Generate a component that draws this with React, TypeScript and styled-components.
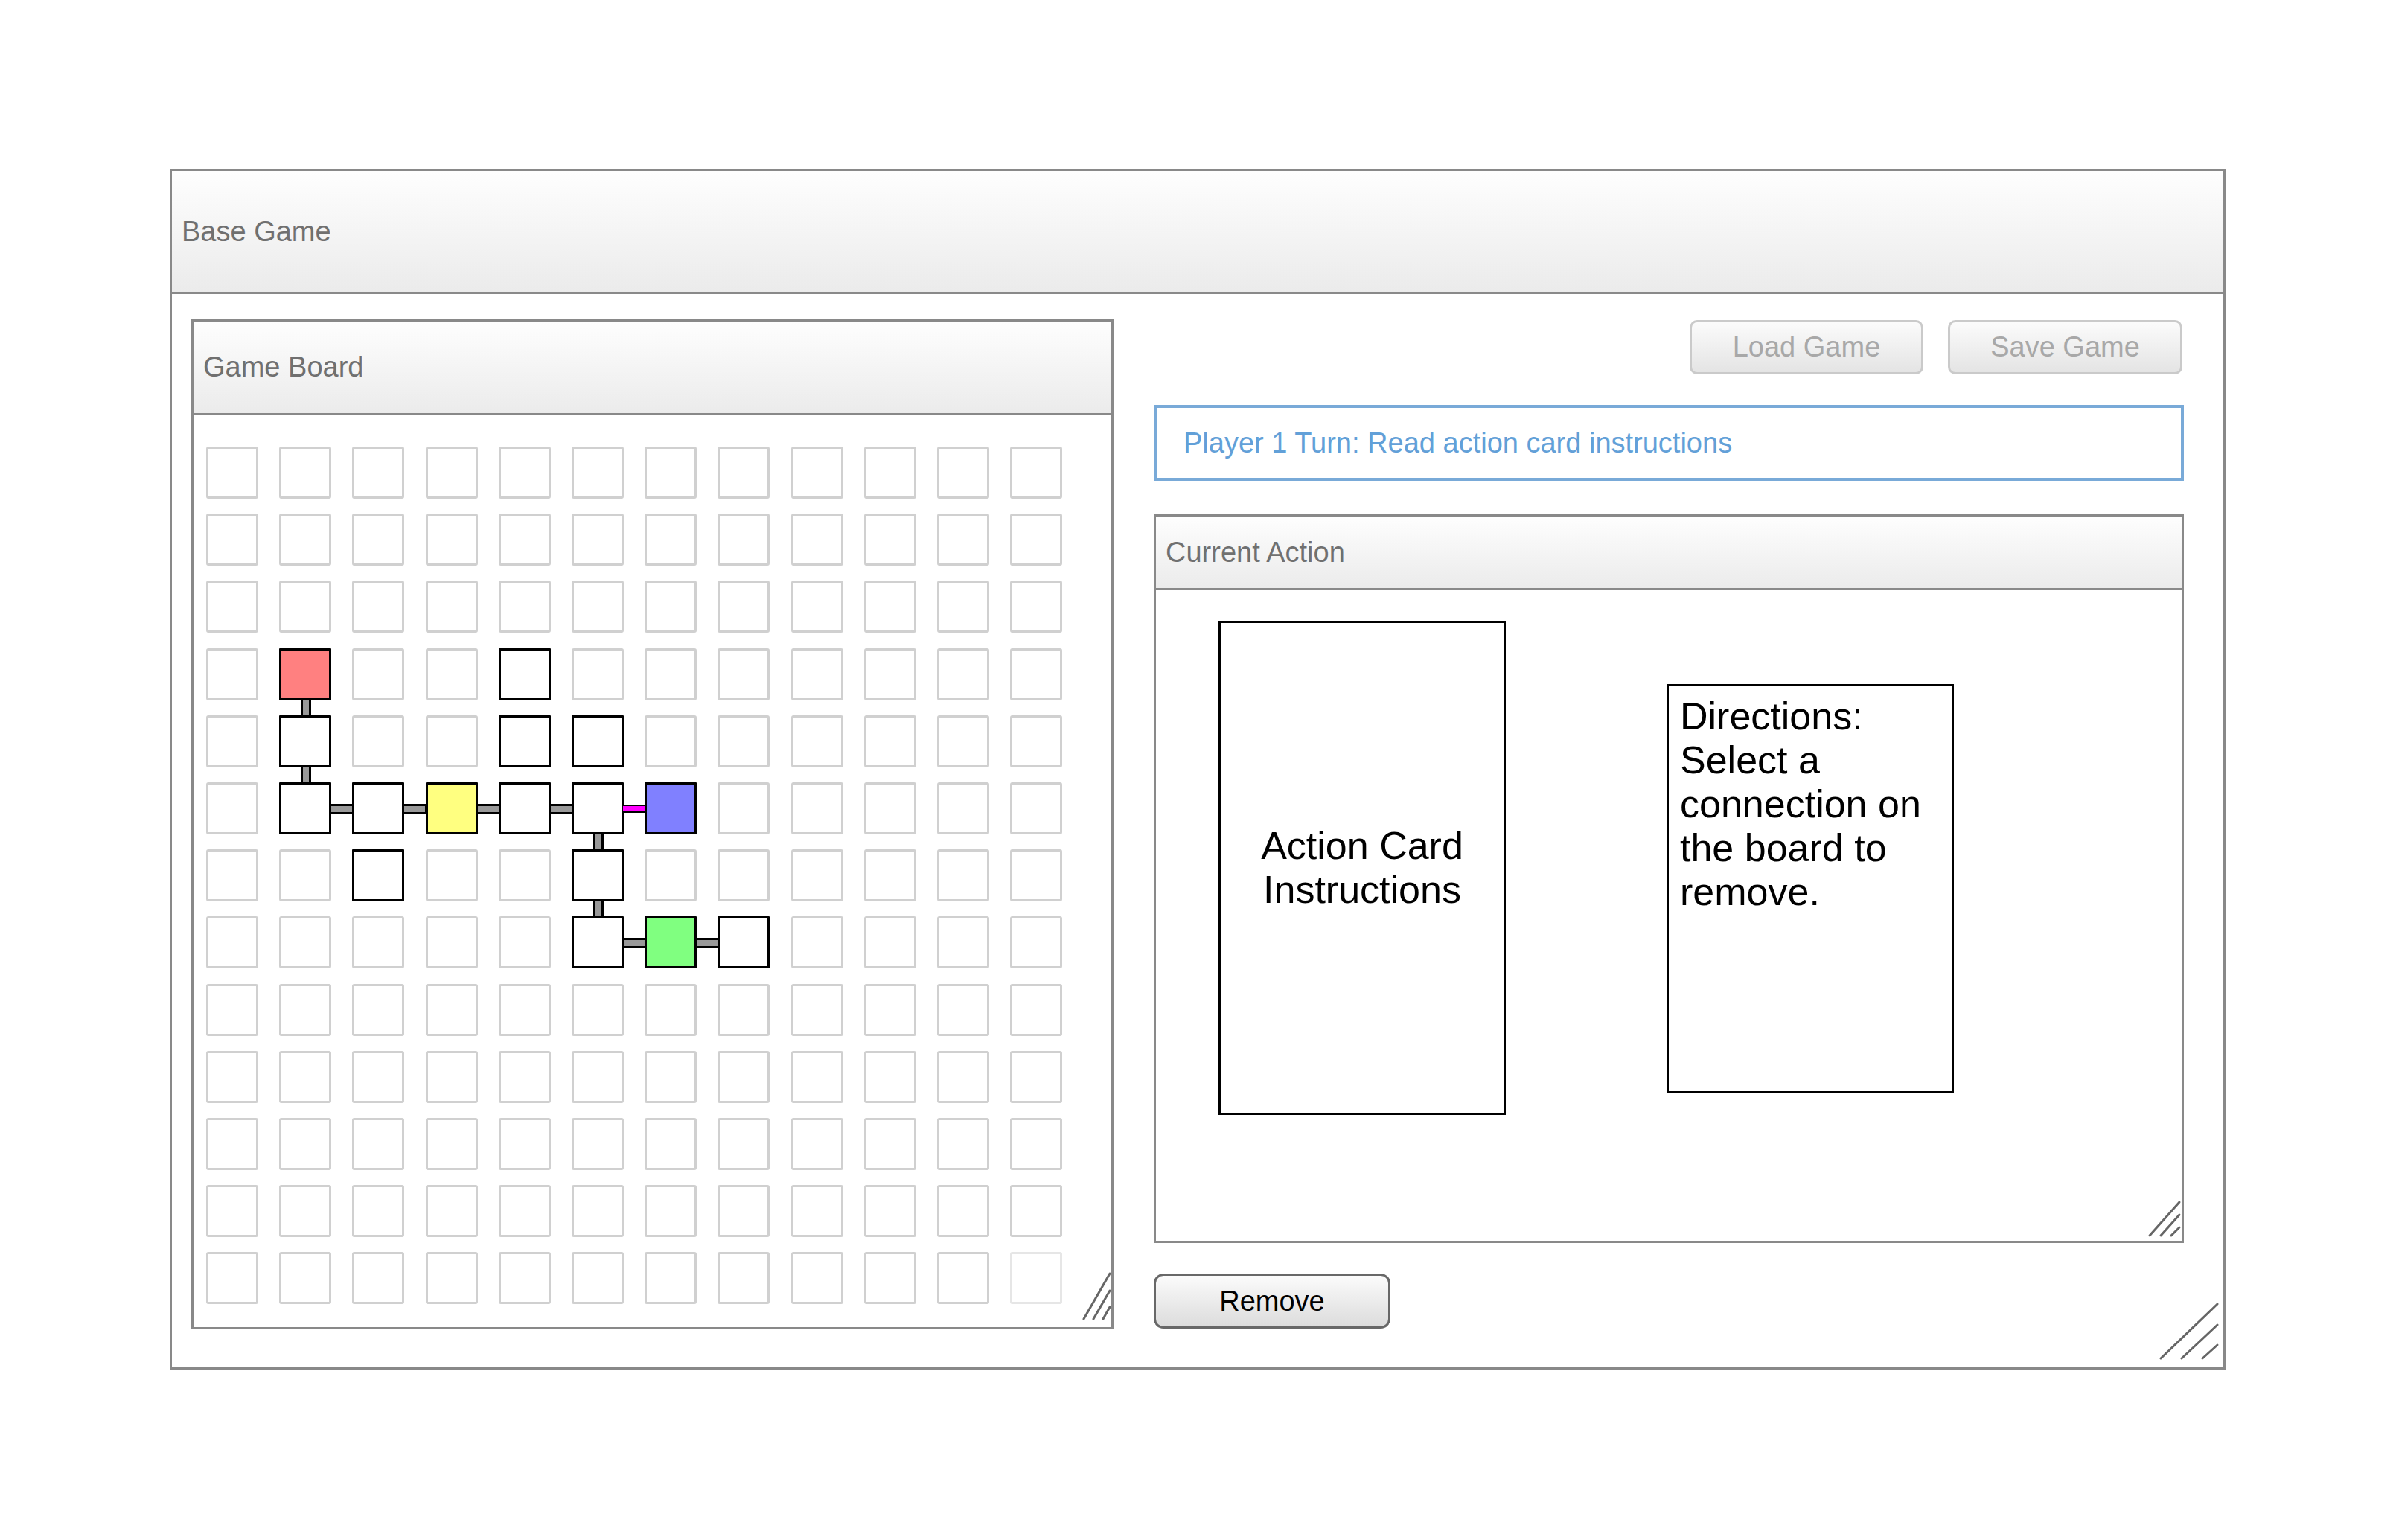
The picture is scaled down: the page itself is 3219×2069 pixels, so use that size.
import React from 'react';
import styled, { createGlobalStyle } from 'styled-components';

const GlobalStyle = createGlobalStyle`
  html, body { margin: 0; padding: 0; background: #ffffff; }
  body { font-family: "Liberation Sans", Arial, Helvetica, sans-serif; }
  * { box-sizing: border-box; }
`;

const Page = styled.div`
  width: 3219px;
  height: 2069px;
  padding: 227px 0 0 228px;
`;

const Window = styled.div`
  position: relative;
  width: 2762px;
  height: 1613px;
  border: 3px solid #898989;
  display: flex;
  flex-direction: column;
  background: #ffffff;
`;

const TitleBar = styled.div<{ $height: number }>`
  height: ${(p) => p.$height}px;
  flex: none;
  display: flex;
  align-items: center;
  padding-left: 13px;
  border-bottom: 3px solid #898989;
  background: linear-gradient(to bottom, #fefefe, #ebebeb);
  color: #707070;
  font-size: 38px;
  white-space: nowrap;
`;

const Body = styled.div`
  display: flex;
  align-items: flex-start;
  gap: 54px;
  padding: 34px 0 0 26px;
`;

const Panel = styled.div<{ $w: number; $h: number }>`
  position: relative;
  width: ${(p) => p.$w}px;
  height: ${(p) => p.$h}px;
  border: 3px solid #898989;
  display: flex;
  flex-direction: column;
  background: #ffffff;
  flex: none;
`;

const BoardArea = styled.div`
  padding: 42px 0 0 17px;
`;

const Grid = styled.div`
  display: grid;
  grid-template-columns: repeat(12, 70px);
  grid-auto-rows: 70px;
  column-gap: 28.2px;
  row-gap: 20.2px;
`;

type CellVariant = 'empty' | 'tile' | 'faint';

const Cell = styled.div<{ $variant: CellVariant; $fill?: string }>`
  position: relative;
  width: 70px;
  height: 70px;
  background: ${(p) => p.$fill || '#ffffff'};
  border: 3px solid
    ${(p) => (p.$variant === 'tile' ? '#000000' : p.$variant === 'faint' ? '#e6e6e6' : '#d0d0d0')};
  border-radius: ${(p) => (p.$variant === 'tile' ? '1px' : '3px')};
`;

const HLink = styled.span<{ $magenta?: boolean }>`
  position: absolute;
  z-index: 1;
  left: 64px;
  top: ${(p) => (p.$magenta ? 27 : 26)}px;
  width: 34px;
  height: ${(p) => (p.$magenta ? 11 : 14)}px;
  background: ${(p) => (p.$magenta ? '#ff00ff' : '#999999')};
  border: ${(p) => (p.$magenta ? 2 : 3)}px solid #000000;
`;

const VLink = styled.span`
  position: absolute;
  z-index: 1;
  top: 64px;
  left: 26px;
  width: 14px;
  height: 26px;
  background: #999999;
  border: 3px solid #000000;
`;

const Column = styled.div`
  width: 1384px;
  display: flex;
  flex-direction: column;
  flex: none;
`;

const ButtonRow = styled.div`
  display: flex;
  justify-content: flex-end;
  gap: 33px;
  margin-top: 1px;
  padding-right: 2px;
`;

const Button = styled.button<{ $disabled?: boolean; $w: number; $h: number }>`
  width: ${(p) => p.$w}px;
  height: ${(p) => p.$h}px;
  border: 3px solid ${(p) => (p.$disabled ? '#cacaca' : '#686868')};
  border-radius: ${(p) => (p.$disabled ? 10 : 13)}px;
  background: linear-gradient(to bottom, #fbfbfb, ${(p) => (p.$disabled ? '#e4e4e4' : '#dcdcdc')});
  color: ${(p) => (p.$disabled ? '#a8a8a8' : '#000000')};
  font-family: "Liberation Sans", Arial, Helvetica, sans-serif;
  font-size: 38px;
  padding: 0;
  display: flex;
  align-items: center;
  justify-content: center;
  flex: none;
`;

const TurnField = styled.div`
  margin-top: 41px;
  height: 102px;
  border: 4px solid #79aad8;
  padding-left: 36px;
  display: flex;
  align-items: center;
  color: #62a0d8;
  font-size: 38px;
  white-space: nowrap;
`;

const ActionWrap = styled.div`
  margin-top: 45px;
`;

const Cards = styled.div`
  display: flex;
  align-items: flex-start;
  gap: 216px;
  padding: 41px 0 0 84px;
`;

const Card = styled.div<{ $h: number; $offset?: number; $centered?: boolean }>`
  width: 386px;
  height: ${(p) => p.$h}px;
  margin-top: ${(p) => p.$offset || 0}px;
  border: 3px solid #000000;
  background: #ffffff;
  color: #000000;
  font-size: 52px;
  line-height: 59px;
  display: flex;
  flex: none;
  ${(p) =>
    p.$centered
      ? `align-items: center; justify-content: center; text-align: center;`
      : `align-items: flex-start; padding: 11px 12px 0 15px; text-align: left;`}
`;

const RemoveWrap = styled.div`
  margin-top: 41px;
`;

const GripSvg = styled.svg<{ $right: number; $bottom: number }>`
  position: absolute;
  right: ${(p) => p.$right}px;
  bottom: ${(p) => p.$bottom}px;
  z-index: 2;
`;

type Seg = [number, number, number, number];

const Grip: React.FC<{ w: number; h: number; right: number; bottom: number; lines: Seg[] }> = ({
  w,
  h,
  right,
  bottom,
  lines,
}) => (
  <GripSvg width={w} height={h} viewBox={`0 0 ${w} ${h}`} $right={right} $bottom={bottom}>
    {lines.map(([x1, y1, x2, y2], i) => (
      <line key={i} x1={x1} y1={y1} x2={x2} y2={y2} stroke="#666666" strokeWidth={3} strokeLinecap="round" />
    ))}
  </GripSvg>
);

type TileSpec = { fill?: string; right?: 'gray' | 'magenta'; down?: boolean };

const tiles: Record<string, TileSpec> = {
  '3-1': { fill: '#ff8080', down: true },
  '3-4': {},
  '4-1': { down: true },
  '4-4': {},
  '4-5': {},
  '5-1': { right: 'gray' },
  '5-2': { right: 'gray' },
  '5-3': { fill: '#ffff80', right: 'gray' },
  '5-4': { right: 'gray' },
  '5-5': { right: 'magenta', down: true },
  '5-6': { fill: '#8080ff' },
  '6-2': {},
  '6-5': { down: true },
  '7-5': { right: 'gray' },
  '7-6': { fill: '#80ff80', right: 'gray' },
  '7-7': {},
};

const ROWS = 13;
const COLS = 12;

const Board: React.FC = () => {
  const cells: React.ReactNode[] = [];
  for (let r = 0; r < ROWS; r++) {
    for (let c = 0; c < COLS; c++) {
      const key = `${r}-${c}`;
      const t = tiles[key];
      if (t) {
        cells.push(
          <Cell key={key} $variant="tile" $fill={t.fill}>
            {t.right && <HLink $magenta={t.right === 'magenta'} />}
            {t.down && <VLink />}
          </Cell>
        );
      } else {
        const faint = r === ROWS - 1 && c === COLS - 1;
        cells.push(<Cell key={key} $variant={faint ? 'faint' : 'empty'} />);
      }
    }
  }
  return <Grid>{cells}</Grid>;
};

export default function App() {
  return (
    <>
      <GlobalStyle />
      <Page>
        <Window>
          <TitleBar $height={165}>Base Game</TitleBar>
          <Body>
            <Panel $w={1239} $h={1357}>
              <TitleBar $height={126}>Game Board</TitleBar>
              <BoardArea>
                <Board />
              </BoardArea>
              <Grip
                w={40}
                h={66}
                right={0}
                bottom={9}
                lines={[
                  [3, 64, 38, 3],
                  [16, 64, 38, 26],
                  [29, 64, 38, 48],
                ]}
              />
            </Panel>
            <Column>
              <ButtonRow>
                <Button $disabled $w={314} $h={73}>
                  Load Game
                </Button>
                <Button $disabled $w={315} $h={73}>
                  Save Game
                </Button>
              </ButtonRow>
              <TurnField>Player 1 Turn: Read action card instructions</TurnField>
              <ActionWrap>
                <Panel $w={1384} $h={979}>
                  <TitleBar $height={99}>Current Action</TitleBar>
                  <Cards>
                    <Card $h={664} $centered>
                      Action Card Instructions
                    </Card>
                    <Card $h={550} $offset={85}>
                      Directions: Select a connection on the board to remove.
                    </Card>
                  </Cards>
                  <Grip
                    w={46}
                    h={51}
                    right={0}
                    bottom={4}
                    lines={[
                      [3, 48, 43, 3],
                      [18, 48, 43, 20],
                      [32, 48, 43, 37],
                    ]}
                  />
                </Panel>
              </ActionWrap>
              <RemoveWrap>
                <Button $w={318} $h={74}>Remove</Button>
              </RemoveWrap>
            </Column>
          </Body>
          <Grip
            w={82}
            h={79}
            right={5}
            bottom={9}
            lines={[
              [3, 76, 79, 3],
              [31, 76, 79, 31],
              [59, 76, 79, 58],
            ]}
          />
        </Window>
      </Page>
    </>
  );
}
